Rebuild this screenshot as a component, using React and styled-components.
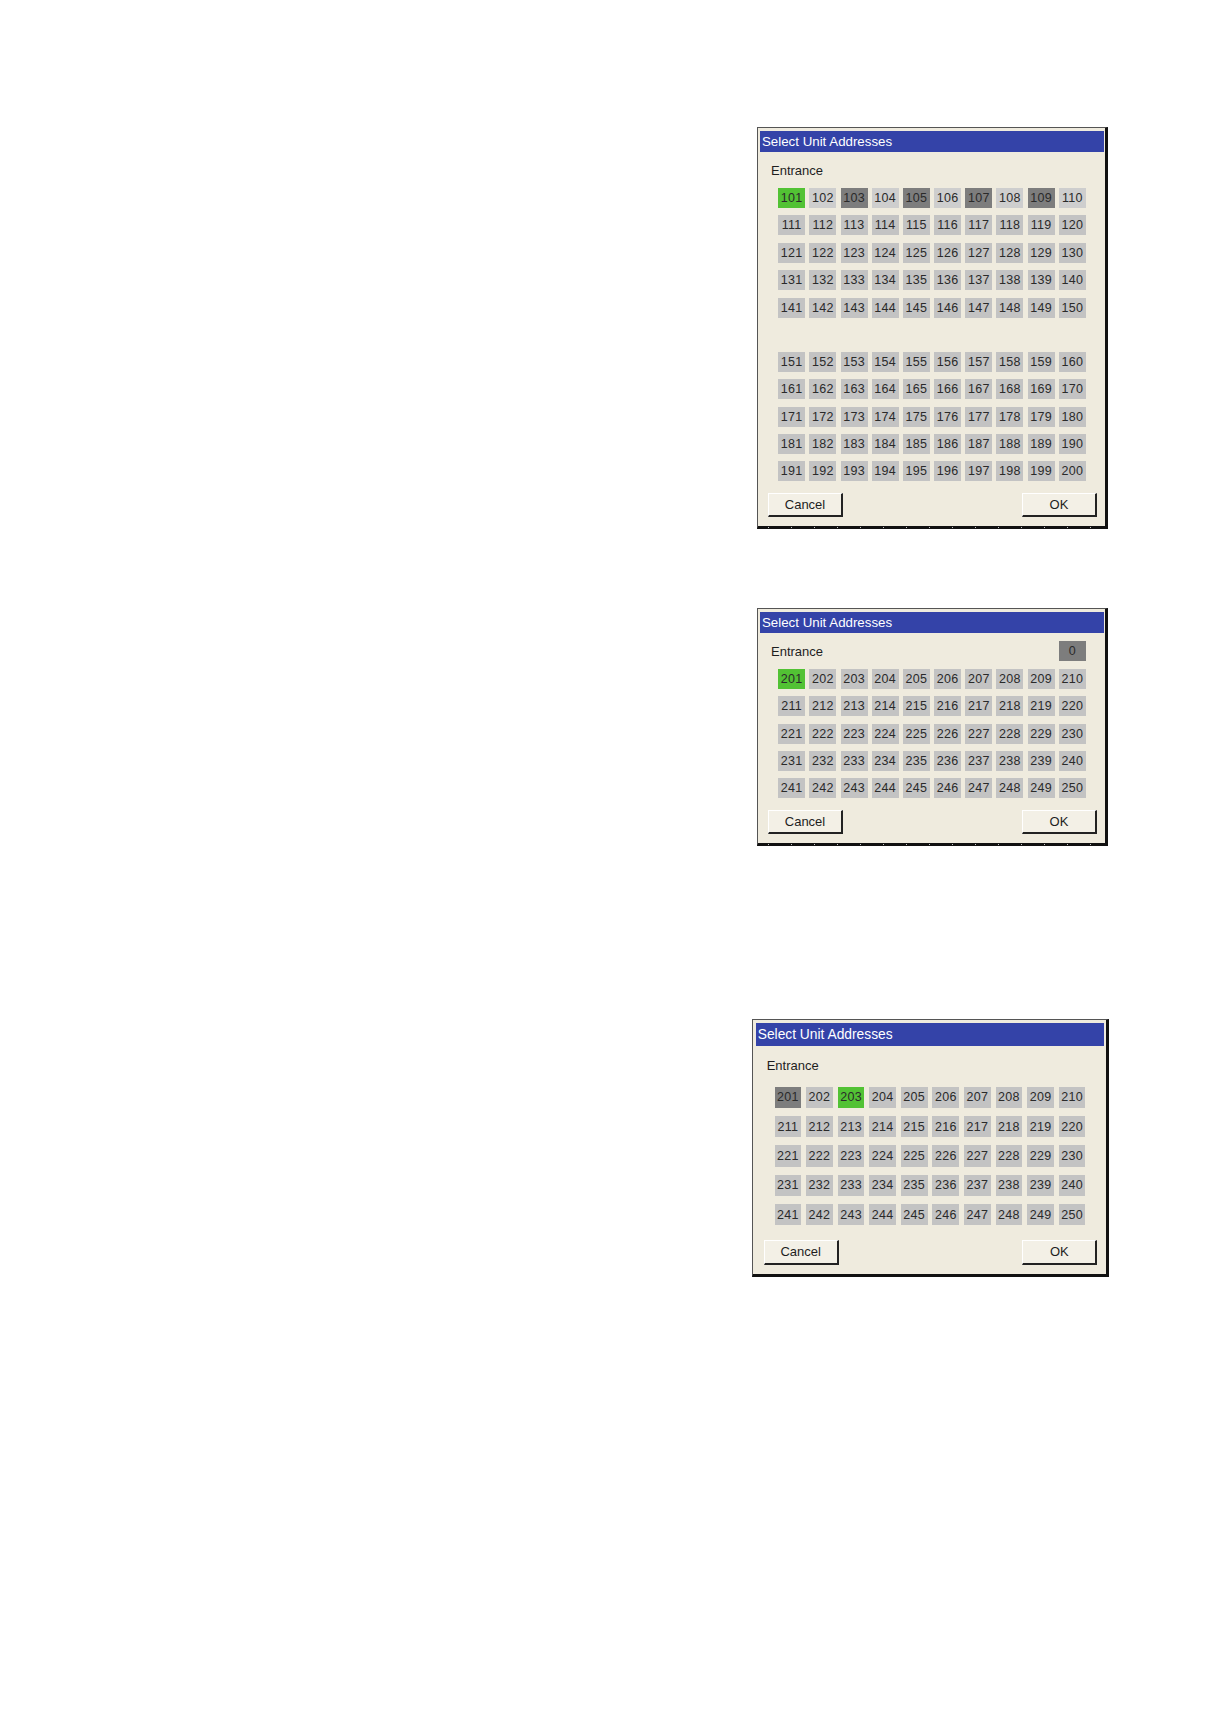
import React from 'react';
import styled, { createGlobalStyle, css } from 'styled-components';

const GlobalStyle = createGlobalStyle`
  html, body {
    margin: 0;
    padding: 0;
    background: #ffffff;
  }

  body {
    font-family: 'Liberation Sans', Arial, sans-serif;
  }
`;

const tones = {
  base: '#c3c3c3',
  light: '#cecece',
  dark: '#7d7d7d',
  on: '#52c234',
};

const Page = styled.div`
  width: 1225px;
  min-height: 1718px;
  box-sizing: border-box;
  padding: 127px 117px 0 0;

  display: flex;
  flex-direction: column;
  align-items: flex-end;
`;

const Dialog = styled.div`
  position: relative;
  box-sizing: border-box;
  width: ${({ $m }) => $m.width}px;
  margin-top: ${({ $m }) => $m.top}px;
  margin-right: ${({ $m }) => $m.shift || 0}px;
  padding: 3px ${({ $m }) => $m.padR}px ${({ $m }) => $m.padB}px ${({ $m }) => $m.padL}px;

  background: #efebde;
  border-top: 1px solid #555;
  border-left: 1px solid #555;
  border-right: 3px solid #111;
  border-bottom: 3px solid #111;

  ${({ $dots }) => $dots && css`
    &::after {
      content: '';
      position: absolute;
      left: -1px;
      right: -3px;
      bottom: -2px;
      height: 1px;
      background: repeating-linear-gradient(
        to right,
        transparent 0 11px,
        #c8c8c8 11px 12px,
        transparent 12px 23px
      );
    }
  `}
`;

const TitleBar = styled.div`
  height: ${({ $m }) => $m.titleH}px;
  line-height: ${({ $m }) => $m.titleH}px;
  padding-left: 2px;
  background: #3443a8;
  color: #ffffff;
  font-size: ${({ $m }) => $m.titleFs}px;
  white-space: nowrap;
`;

const HeaderRow = styled.div`
  display: flex;
  align-items: center;
  justify-content: space-between;
  height: ${({ $m }) => $m.cellH}px;
  margin-top: ${({ $m }) => $m.headTop}px;
  padding: 0 18px 0 11px;
`;

const Label = styled.span`
  font-size: 13px;
  color: #1e1e1e;
`;

const Grid = styled.div`
  display: grid;
  grid-template-columns: repeat(10, ${({ $m }) => $m.cellW}px);
  grid-auto-rows: ${({ $m }) => $m.cellH}px;
  column-gap: ${({ $m }) => $m.colGap}px;
  row-gap: ${({ $m }) => $m.rowGap}px;
  justify-content: center;
  margin-top: ${({ $gap }) => $gap}px;
`;

const Cell = styled.div`
  width: ${({ $m }) => $m.cellW}px;
  height: ${({ $m }) => $m.cellH}px;
  display: flex;
  align-items: center;
  justify-content: center;
  font-size: 12.5px;
  letter-spacing: 0.3px;
  color: #2a2a2a;
  background: ${({ $tone }) => tones[$tone]};
`;

const ButtonRow = styled.div`
  display: flex;
  justify-content: space-between;
  margin-top: ${({ $m }) => $m.btnTop}px;
  padding: 0 7px 0 8px;
`;

const Button = styled.button`
  width: 75px;
  height: ${({ $m }) => $m.btnH}px;
  box-sizing: border-box;
  padding: 0;
  background: #f3f0e6;
  border-top: 1px solid #ffffff;
  border-left: 1px solid #ffffff;
  border-right: 2px solid #222;
  border-bottom: 2px solid #222;
  font-family: 'Liberation Sans', Arial, sans-serif;
  font-size: 13px;
  color: #1e1e1e;
`;

const range = (from, count) => Array.from({ length: count }, (_, i) => from + i);

const small = {
  width: 351, padL: 2, padR: 1, padB: 9,
  titleH: 21, titleFs: 13.3, headTop: 8,
  cellW: 27, cellH: 20, colGap: 4.2, rowGap: 7.4,
  btnTop: 12, btnH: 24,
};

const large = {
  width: 357, padL: 2.7, padR: 1.7, padB: 9.7, shift: -1,
  titleH: 23, titleFs: 13.8, headTop: 9,
  cellW: 26.7, cellH: 21.4, colGap: 4.9, rowGap: 7.95,
  btnTop: 14.2, btnH: 25,
};

const AddressDialog = ({ m, blocks, tone, extra, dots }) => (
  <Dialog $m={m} $dots={dots}>
    <TitleBar $m={m}>Select Unit Addresses</TitleBar>
    <HeaderRow $m={m}>
      <Label>Entrance</Label>
      {extra != null && <Cell $m={m} $tone="dark">{extra}</Cell>}
    </HeaderRow>
    {blocks.map((block, i) => (
      <Grid key={block.numbers[0]} $m={m} $gap={block.gap}>
        {block.numbers.map(n => (
          <Cell key={n} $m={m} $tone={tone(n, i)}>{n}</Cell>
        ))}
      </Grid>
    ))}
    <ButtonRow $m={m}>
      <Button $m={m}>Cancel</Button>
      <Button $m={m}>OK</Button>
    </ButtonRow>
  </Dialog>
);

const firstTone = (n) => {
  if (n === 101) return 'on';
  if (n <= 110) return n % 2 ? 'dark' : 'light';
  return 'base';
};

const secondTone = (n) => (n === 201 ? 'on' : 'base');

const thirdTone = (n) => {
  if (n === 201) return 'dark';
  if (n === 203) return 'on';
  return 'base';
};

const App = () => (
  <>
    <GlobalStyle />
    <Page>
      <AddressDialog
        m={{ ...small, top: 0 }}
        dots
        tone={firstTone}
        blocks={[
          { numbers: range(101, 50), gap: 8 },
          { numbers: range(151, 50), gap: 34.2 },
        ]}
      />
      <AddressDialog
        m={{ ...small, top: 79 }}
        dots
        extra="0"
        tone={secondTone}
        blocks={[{ numbers: range(201, 50), gap: 7.5 }]}
      />
      <AddressDialog
        m={{ ...large, top: 172.6 }}
        tone={thirdTone}
        blocks={[{ numbers: range(201, 50), gap: 10.3 }]}
      />
    </Page>
  </>
);

export default App;
